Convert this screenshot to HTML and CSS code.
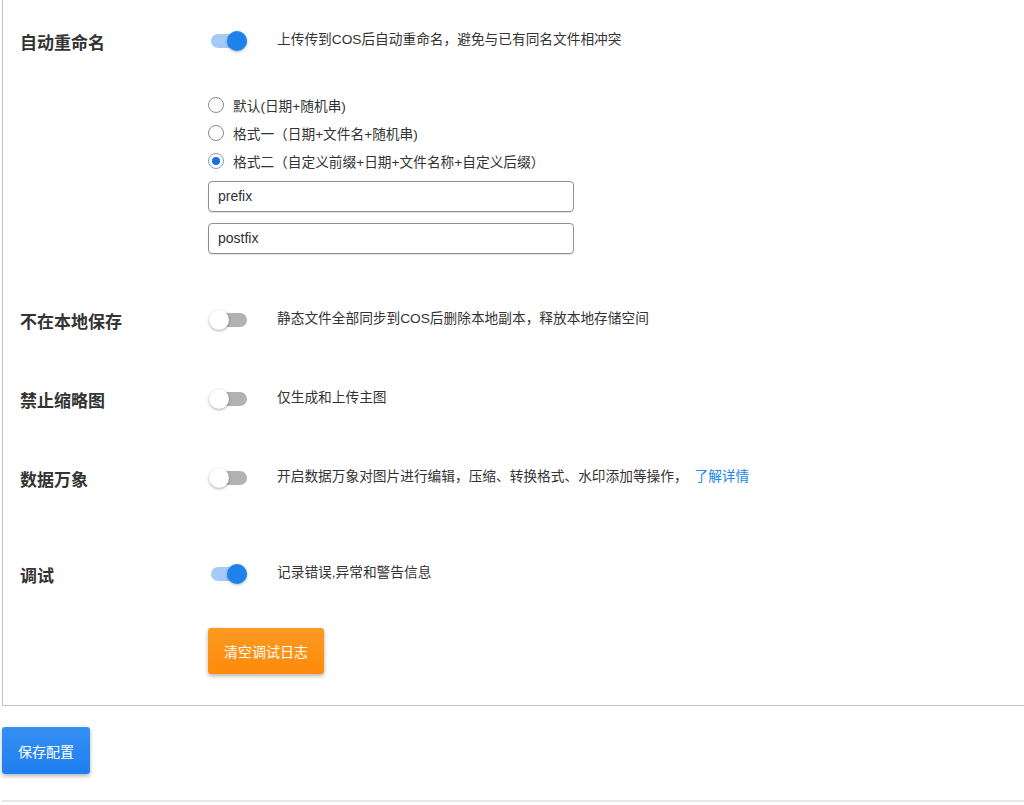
FILE: index.html
```html
<!DOCTYPE html>
<html lang="zh-CN">
<head>
<meta charset="utf-8">
<title>设置</title>
<link rel="stylesheet" href="styles.css">
</head>
<body>
<div class="panel">
  <div class="row r1">
    <div class="label">自动重命名</div>
    <div class="control">
      <div class="line">
        <span class="switch on"><span class="track"></span><span class="knob"></span></span>
        <span class="desc">上传传到COS后自动重命名，避免与已有同名文件相冲突</span>
      </div>
      <div class="radios">
        <label class="radio"><span class="dot"></span><span>默认(日期+随机串)</span></label>
        <label class="radio"><span class="dot"></span><span>格式一（日期+文件名+随机串)</span></label>
        <label class="radio"><span class="dot checked"></span><span>格式二（自定义前缀+日期+文件名称+自定义后缀）</span></label>
      </div>
      <div class="field first">prefix</div>
      <div class="field second">postfix</div>
    </div>
  </div>

  <div class="row r2">
    <div class="label">不在本地保存</div>
    <div class="control">
      <div class="line">
        <span class="switch"><span class="track"></span><span class="knob"></span></span>
        <span class="desc">静态文件全部同步到COS后删除本地副本，释放本地存储空间</span>
      </div>
    </div>
  </div>

  <div class="row r3">
    <div class="label">禁止缩略图</div>
    <div class="control">
      <div class="line">
        <span class="switch"><span class="track"></span><span class="knob"></span></span>
        <span class="desc">仅生成和上传主图</span>
      </div>
    </div>
  </div>

  <div class="row r3">
    <div class="label">数据万象</div>
    <div class="control">
      <div class="line">
        <span class="switch"><span class="track"></span><span class="knob"></span></span>
        <span class="desc">开启数据万象对图片进行编辑，压缩、转换格式、水印添加等操作， <a class="link" href="#">了解详情</a></span>
      </div>
    </div>
  </div>

  <div class="row r5">
    <div class="label">调试</div>
    <div class="control">
      <div class="line">
        <span class="switch on"><span class="track"></span><span class="knob"></span></span>
        <span class="desc">记录错误,异常和警告信息</span>
      </div>
      <button class="btn orange">清空调试日志</button>
    </div>
  </div>
</div>

<div class="actions">
  <button class="btn blue">保存配置</button>
</div>
<div class="rule"></div>
</body>
</html>
```

FILE: styles.css
```css
html, body {
  margin: 0;
  padding: 0;
  background: #ffffff;
}

body {
  font-family: "Liberation Sans", "Noto Sans CJK SC", sans-serif;
  color: #333333;
  font-size: 13.7px;
}

.panel {
  margin-left: 2px;
  border-left: 1px solid #c3c3c3;
  border-bottom: 1px solid #c3c3c3;
  padding: 0 0 31px 17px;
  background: #fff;
}

.row {
  display: grid;
  grid-template-columns: 188px 1fr;
  align-items: start;
}

.r1 { padding-top: 31px; }
.r2 { padding-top: 56px; }
.r3 { padding-top: 59px; }
.r5 { padding-top: 76px; }

.label {
  font-size: 17px;
  font-weight: bold;
  color: #333;
  line-height: 20px;
  height: 20px;
  margin-top: 3px;
  margin-bottom: -3px;
}

.control {
  display: flex;
  flex-direction: column;
  align-items: flex-start;
}

.line {
  display: flex;
  align-items: center;
  height: 20px;
}

.desc {
  font-size: 13.7px;
  line-height: 20px;
  color: #333;
  margin-top: -2px;
  white-space: nowrap;
}

.link {
  color: #2384ec;
  text-decoration: none;
  margin-left: 3px;
}

.switch {
  position: relative;
  width: 40px;
  height: 20px;
  margin-right: 29px;
  flex: none;
}

.switch .track {
  position: absolute;
  left: 3px;
  top: 3px;
  width: 36px;
  height: 14px;
  border-radius: 7px;
  background: #b2b2b2;
}

.switch .knob {
  position: absolute;
  left: 1px;
  top: 0;
  width: 20px;
  height: 20px;
  border-radius: 50%;
  background: #fff;
  box-shadow: 0 1px 3px rgba(0, 0, 0, 0.35);
}

.switch.on .track {
  background: #a3cbf6;
}

.switch.on .knob {
  left: 19px;
  background: #1f82ec;
  box-shadow: 0 1px 3px rgba(0, 0, 0, 0.3);
}

.radios {
  margin-top: 40px;
  display: flex;
  flex-direction: column;
}

.radio {
  display: flex;
  align-items: center;
  height: 28px;
  font-size: 13.7px;
  color: #333;
}

.dot {
  box-sizing: border-box;
  width: 16px;
  height: 16px;
  border-radius: 50%;
  border: 1px solid #8a8a8a;
  background: #fff;
  margin-right: 9px;
  position: relative;
  flex: none;
}

.dot.checked {
  border-color: #7d9cc7;
}

.dot.checked::after {
  content: "";
  position: absolute;
  left: 3px;
  top: 3px;
  width: 8px;
  height: 8px;
  border-radius: 50%;
  background: #2071d6;
}

.field {
  box-sizing: border-box;
  width: 366px;
  height: 31px;
  border: 1px solid #8c8f94;
  border-radius: 4px;
  box-shadow: 0 1px 1px rgba(0, 0, 0, 0.12);
  padding: 0 9px;
  line-height: 29px;
  font-size: 14px;
  color: #2c3338;
}

.field.first { margin-top: 6px; }
.field.second { margin-top: 11px; }

.btn {
  font-family: "Liberation Sans", "Noto Sans CJK SC", sans-serif;
  font-size: 14px;
  color: #fff;
  border: none;
  border-radius: 3px;
  cursor: pointer;
  box-shadow: 0 2px 4px rgba(0, 0, 0, 0.3);
}

.btn.orange {
  margin-top: 44px;
  width: 116px;
  height: 46px;
  background: linear-gradient(#fb9a22, #ff8a0a);
}

.actions {
  padding: 21px 0 0 2px;
}

.btn.blue {
  width: 88px;
  height: 47px;
  background: linear-gradient(#3590f1, #1f7ef0);
}

.rule {
  margin: 26px 0 0 2px;
  height: 2px;
  background: #e8e8e8;
}
```
